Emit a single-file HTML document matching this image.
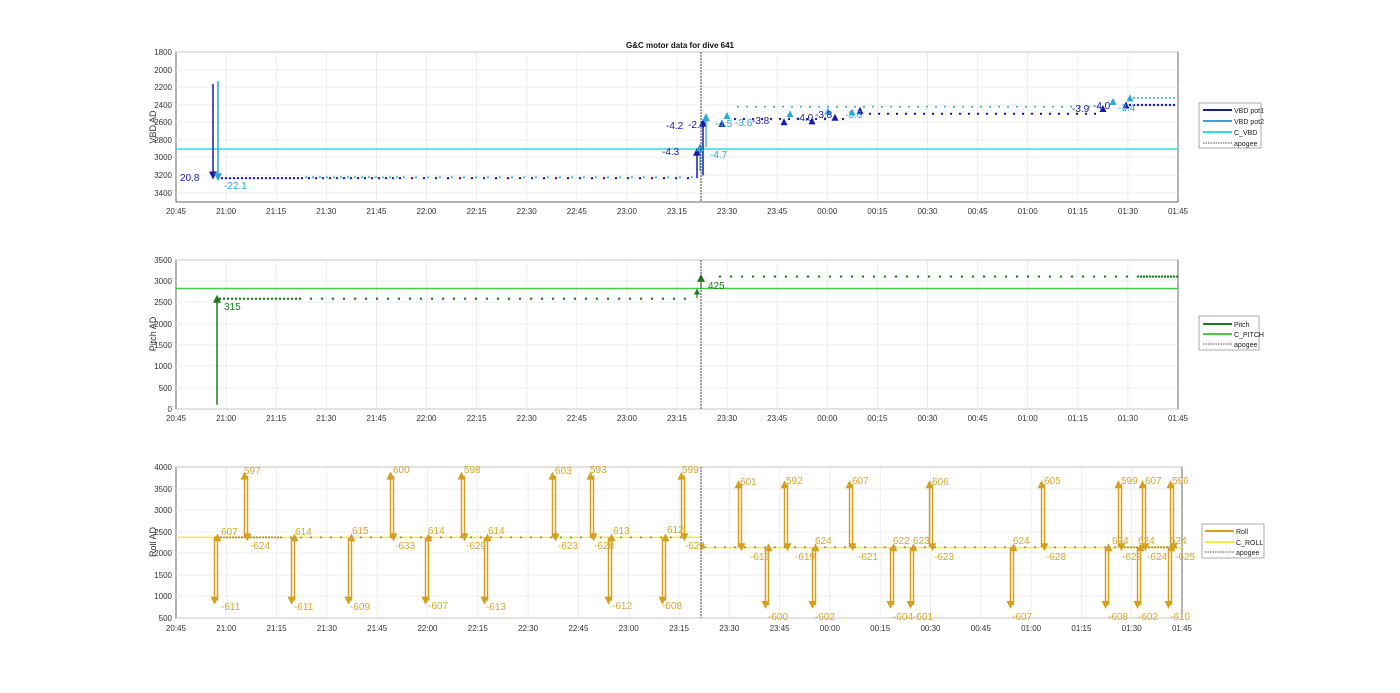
<!DOCTYPE html>
<html><head><meta charset="utf-8"><style>
html,body{margin:0;padding:0;background:#fff}
svg{display:block;font-family:"Liberation Sans",sans-serif}
.t{font-size:8px;fill:#333}
.yl{font-size:9px;fill:#333}
.lg{font-size:7px;fill:#222}
</style></head><body>
<svg id="s" width="1400" height="693" viewBox="0 0 1400 693">
<rect width="1400" height="693" fill="#fff"/>
<g id="grid"></g>
<g id="data"></g>
<text x="680" y="48" text-anchor="middle" font-size="8" font-weight="bold" fill="#111">G&amp;C motor data for dive 641</text>
<!-- y labels -->
<text class="yl" transform="translate(156,127) rotate(-90)" text-anchor="middle">VBD AD</text>
<text class="yl" transform="translate(156,334) rotate(-90)" text-anchor="middle">Pitch AD</text>
<text class="yl" transform="translate(156,542) rotate(-90)" text-anchor="middle">Roll AD</text>
<!-- top y ticks -->
<g class="t" text-anchor="end">
<text x="172" y="55">1800</text><text x="172" y="73">2000</text><text x="172" y="90">2200</text><text x="172" y="108">2400</text><text x="172" y="125">2600</text><text x="172" y="143">2800</text><text x="172" y="160">3000</text><text x="172" y="178">3200</text><text x="172" y="196">3400</text>
<text x="172" y="263">3500</text><text x="172" y="284">3000</text><text x="172" y="305">2500</text><text x="172" y="327">2000</text><text x="172" y="348">1500</text><text x="172" y="369">1000</text><text x="172" y="391">500</text><text x="172" y="412">0</text>
<text x="172" y="470">4000</text><text x="172" y="492">3500</text><text x="172" y="513">3000</text><text x="172" y="535">2500</text><text x="172" y="556">2000</text><text x="172" y="578">1500</text><text x="172" y="599">1000</text><text x="172" y="621">500</text>
</g>
<g class="t" text-anchor="middle">
<text x="176" y="214">20:45</text><text x="243" y="214">21:00</text><text x="309" y="214">21:15</text><text x="376" y="214">21:30</text><text x="443" y="214">21:45</text><text x="510" y="214">22:00</text><text x="576" y="214">22:15</text><text x="643" y="214">22:30</text><text x="710" y="214">22:45</text><text x="776" y="214">23:00</text><text x="843" y="214">23:15</text><text x="910" y="214">23:30</text><text x="977" y="214">23:45</text><text x="1043" y="214">00:00</text><text x="1110" y="214">00:15</text><text x="1177" y="214">00:30</text>
</g>
<g id="xt"></g>
<g class="t" text-anchor="middle" id="xlab"></g>
<!-- data labels -->
<g font-size="10">
<text x="180" y="181" fill="#1a1aa8">20.8</text><text x="224" y="189" fill="#2aa8d8">-22.1</text>
<text x="666" y="129" fill="#1a1aa8">-4.2</text><text x="688" y="128" fill="#1a1aa8">-2.4</text>
<text x="662" y="155" fill="#1a1aa8">-4.3</text><text x="710" y="158" fill="#2aa8d8">-4.7</text>
<text x="715" y="127" fill="#2aa8d8">-4.5</text><text x="735" y="126" fill="#2aa8d8">-3.6</text><text x="752" y="124" fill="#1a1aa8">-3.8</text>
<text x="796" y="121" fill="#1a1aa8">-4.0</text><text x="815" y="118" fill="#1a1aa8">-3.8</text><text x="845" y="118" fill="#2aa8d8">-3.6</text>
<text x="1072" y="112" fill="#1a1aa8">-3.9</text><text x="1093" y="109" fill="#1a1aa8">-4.0</text><text x="1118" y="111" fill="#2aa8d8">-3.4</text>
<text x="224" y="310" fill="#1e7a1e">315</text><text x="708" y="289" fill="#1e7a1e">425</text>
</g>
<g font-size="10" fill="#d4a830">
<text x="221" y="535">607</text><text x="221" y="610">-611</text><text x="244" y="474">597</text><text x="250" y="549">-624</text>
<text x="295" y="535">614</text><text x="294" y="610">-611</text><text x="352" y="534">615</text><text x="350" y="610">-609</text>
<text x="393" y="473">600</text><text x="395" y="549">-633</text><text x="428" y="534">614</text><text x="428" y="609">-607</text>
<text x="464" y="473">598</text><text x="466" y="549">-629</text><text x="488" y="534">614</text><text x="486" y="610">-613</text>
<text x="555" y="474">603</text><text x="558" y="549">-623</text><text x="590" y="473">593</text><text x="594" y="549">-628</text>
<text x="613" y="534">613</text><text x="612" y="609">-612</text><text x="667" y="533">612</text><text x="662" y="609">-608</text>
<text x="682" y="473">599</text><text x="685" y="549">-624</text>
<text x="740" y="485">601</text><text x="750" y="560">-619</text><text x="786" y="484">592</text><text x="795" y="560">-619</text>
<text x="768" y="620">-600</text><text x="815" y="544">624</text><text x="815" y="620">-602</text>
<text x="852" y="484">607</text><text x="858" y="560">-621</text><text x="893" y="544">622</text><text x="913" y="544">623</text>
<text x="893" y="620">-604</text><text x="913" y="620">-601</text><text x="932" y="485">606</text><text x="934" y="560">-623</text>
<text x="1013" y="544">624</text><text x="1012" y="620">-607</text><text x="1044" y="484">605</text><text x="1046" y="560">-628</text>
<text x="1108" y="620">-608</text><text x="1112" y="544">624</text><text x="1121" y="484">599</text><text x="1122" y="560">-628</text>
<text x="1145" y="484">607</text><text x="1138" y="544">624</text><text x="1147" y="560">-624</text><text x="1138" y="620">-602</text>
<text x="1172" y="484">596</text><text x="1170" y="544">624</text><text x="1175" y="560">-625</text><text x="1170" y="620">-610</text>
</g>
<!-- legends -->
<g>
<rect x="1199" y="103" width="62" height="45" fill="#fff" stroke="#888" stroke-width="0.7"/>
<line x1="1203" y1="110" x2="1232" y2="110" stroke="#1a1a9e" stroke-width="2"/><text class="lg" x="1234" y="113">VBD pot1</text>
<line x1="1203" y1="121" x2="1232" y2="121" stroke="#3aa0e0" stroke-width="2"/><text class="lg" x="1234" y="124">VBD pot2</text>
<line x1="1203" y1="132" x2="1232" y2="132" stroke="#2ee0e0" stroke-width="2"/><text class="lg" x="1234" y="135">C_VBD</text>
<line x1="1203" y1="143" x2="1232" y2="143" stroke="#555" stroke-dasharray="1.5,1"/><text class="lg" x="1234" y="146">apogee</text>
<rect x="1199" y="316" width="60" height="34" fill="#fff" stroke="#888" stroke-width="0.7"/>
<line x1="1203" y1="324" x2="1232" y2="324" stroke="#1e7a1e" stroke-width="2"/><text class="lg" x="1234" y="327">Pitch</text>
<line x1="1203" y1="334" x2="1232" y2="334" stroke="#44cc44" stroke-width="2"/><text class="lg" x="1234" y="337">C_PITCH</text>
<line x1="1203" y1="344" x2="1232" y2="344" stroke="#555" stroke-dasharray="1.5,1"/><text class="lg" x="1234" y="347">apogee</text>
<rect x="1202" y="524" width="62" height="34" fill="#fff" stroke="#888" stroke-width="0.7"/>
<line x1="1205" y1="531" x2="1234" y2="531" stroke="#d4a020" stroke-width="2"/><text class="lg" x="1236" y="534">Roll</text>
<line x1="1205" y1="542" x2="1234" y2="542" stroke="#f0f040" stroke-width="2"/><text class="lg" x="1236" y="545">C_ROLL</text>
<line x1="1205" y1="552" x2="1234" y2="552" stroke="#555" stroke-dasharray="1.5,1"/><text class="lg" x="1236" y="555">apogee</text>
</g>
</svg>
<script>
var NS="http://www.w3.org/2000/svg";
var G=document.getElementById('grid'),D=document.getElementById('data'),XL=document.getElementById('xlab');
function el(p,t,a){var e=document.createElementNS(NS,t);for(var k in a)e.setAttribute(k,a[k]);p.appendChild(e);return e;}
var axes=[[52,202,1178,[52,70,87,105,122,140,157,175,193]],[260,409,1178,[260,281,302,324,345,366,388,409]],[467,618,1182,[467,489,510,532,553,575,596,618]]];
var labs=["20:45","21:00","21:15","21:30","21:45","22:00","22:15","22:30","22:45","23:00","23:15","23:30","23:45","00:00","00:15","00:30","00:45","01:00","01:15","01:30","01:45"];
axes.forEach(function(a,ai){
 var x0=176,x1=a[2],w=x1-x0;
 el(G,'rect',{x:x0,y:a[0],width:w,height:a[1]-a[0],fill:'#fff',stroke:'#444','stroke-width':0.8});
 for(var i=1;i<20;i++){var x=x0+w*i/20;el(G,'line',{x1:x,y1:a[0],x2:x,y2:a[1],stroke:'#e6e6e6','stroke-width':0.7});}
 a[3].forEach(function(y){el(G,'line',{x1:x0,y1:y,x2:x1,y2:y,stroke:'#e6e6e6','stroke-width':0.7});});
});
// hide static label group for top (replace by computed)
document.querySelectorAll('text[y="214"]').forEach(function(t){t.remove();});
var ly=[214,421,631];
axes.forEach(function(a,ai){var w=a[2]-176;for(var i=0;i<21;i++){var t=el(XL,'text',{x:176+w*i/20,y:ly[ai]});t.textContent=labs[i];}});
var AX=701;
function ln(x1,y1,x2,y2,c,w,d){var o={x1:x1,y1:y1,x2:x2,y2:y2,stroke:c,'stroke-width':w};if(d)o['stroke-dasharray']=d;el(D,'line',o);}
function dot(x,y,c,r){el(D,'circle',{cx:x,cy:y,r:r||1.2,fill:c});}
function tri(x,y,c,up,s){s=s||4;el(D,'polygon',{points:up?(x-s)+','+(y+s)+' '+(x+s)+','+(y+s)+' '+x+','+(y-s):(x-s)+','+(y-s)+' '+(x+s)+','+(y-s)+' '+x+','+(y+s),fill:c});}
// TOP
var yv=function(v){return 52+(v-1800)*150/1700;};
ln(176,yv(2900),1178,yv(2900),'#2ee0e0',1.5);
var B='#1a1aa8',C='#2aa8d8';
for(var x=218;x<695;x+=(x<300?4:(x<400?7:12))){dot(x,yv(3230),B);if(x>300)dot(x+4,yv(3220),C,1);}
for(var x=735;x<1100;x+=9){dot(x,yv(2500+ (x<850?60:0)),B);dot(x+3,yv(2420),C,1);}
for(var x=1130;x<1178;x+=4){dot(x,yv(2400),B);dot(x,yv(2320),C,1);}
ln(213,yv(2160),213,yv(3200),B,1.5);tri(213,yv(3200),B,false);
ln(218,yv(2130),218,yv(3220),C,1.5);tri(218,yv(3220),C,false);
ln(697,yv(3230),697,yv(2930),B,1.5);tri(697,yv(2930),B,true);
ln(703,yv(3200),703,yv(2600),B,1.5);tri(703,yv(2600),B,true);
ln(700,yv(3150),700,yv(2880),C,1.2);tri(700,yv(2880),C,true);
ln(706,yv(2880),706,yv(2540),C,1.2);tri(706,yv(2540),C,true);
[[722,2610,B],[727,2520,C],[784,2590,B],[790,2500,C],[812,2580,B],[828,2470,C],[835,2540,B],[852,2480,C],[860,2460,B],[1103,2440,B],[1113,2360,C],[1126,2400,B],[1130,2320,C]].forEach(function(p){tri(p[0],yv(p[1]),p[2],true,3.5);});
// MID
var yp=function(v){return 409-v*149/3500;};
ln(176,yp(2830),1178,yp(2830),'#44cc44',1.5);
var GR='#1e7a1e';
for(var x=220;x<690;x+=(x<300?4:11))dot(x,yp(2590),GR);
for(var x=720;x<1178;x+=(x<1130?11:3))dot(x,yp(3110),GR);
ln(217,yp(100),217,yp(2590),GR,1.5);tri(217,yp(2590),GR,true);
ln(697,yp(2600),697,yp(2760),GR,1.2);tri(697,yp(2760),GR,true,3);
ln(701,yp(2850),701,yp(3080),GR,1.2);tri(701,yp(3080),GR,true);
// BOTTOM
var yr=function(v){return 618-(v-500)*151/3500;};
ln(176,yr(2370),AX,yr(2370),'#f0f040',1.5);ln(AX,yr(2130),1182,yr(2130),'#f0f040',1.5);
var O='#d4a020';
for(var x=215;x<690;x+=(x<280?3:10))dot(x,yr(2370),'#a08030',1);
for(var x=705;x<1178;x+=(x>1120?3:10))dot(x,yr(2140),'#a08030',1);
var lo=900,hi=3800;
[[216,2370],[293,2370],[350,2370],[427,2370],[486,2370],[610,2370],[664,2370]].forEach(function(p){ln(p[0]-1.5,yr(2370),p[0]-1.5,yr(lo),O,1.5);tri(p[0]-1.5,yr(lo),O,false);ln(p[0]+1.5,yr(lo),p[0]+1.5,yr(2370),O,1.5);tri(p[0]+1.5,yr(2370),O,true);});
[246,392,463,554,592,683].forEach(function(x){ln(x-1.5,yr(2370),x-1.5,yr(hi),O,1.5);tri(x-1.5,yr(hi),O,true);ln(x+1.5,yr(hi),x+1.5,yr(2370),O,1.5);tri(x+1.5,yr(2370),O,false);});
[767,814,892,912,1012,1107,1139,1170].forEach(function(x){ln(x-1.5,yr(2140),x-1.5,yr(lo-100),O,1.5);tri(x-1.5,yr(lo-100),O,false);ln(x+1.5,yr(lo-100),x+1.5,yr(2140),O,1.5);tri(x+1.5,yr(2140),O,true);});
[740,786,851,931,1043,1120,1144,1172].forEach(function(x){ln(x-1.5,yr(2140),x-1.5,yr(3600),O,1.5);tri(x-1.5,yr(3600),O,true);ln(x+1.5,yr(3600),x+1.5,yr(2140),O,1.5);tri(x+1.5,yr(2140),O,false);});
tri(702,yr(2150),O,false,3);
// apogee
[[52,202],[260,409],[467,618]].forEach(function(a){ln(AX,a[0],AX,a[1],'#444',1,'2,1');});
</script>
</body></html>
